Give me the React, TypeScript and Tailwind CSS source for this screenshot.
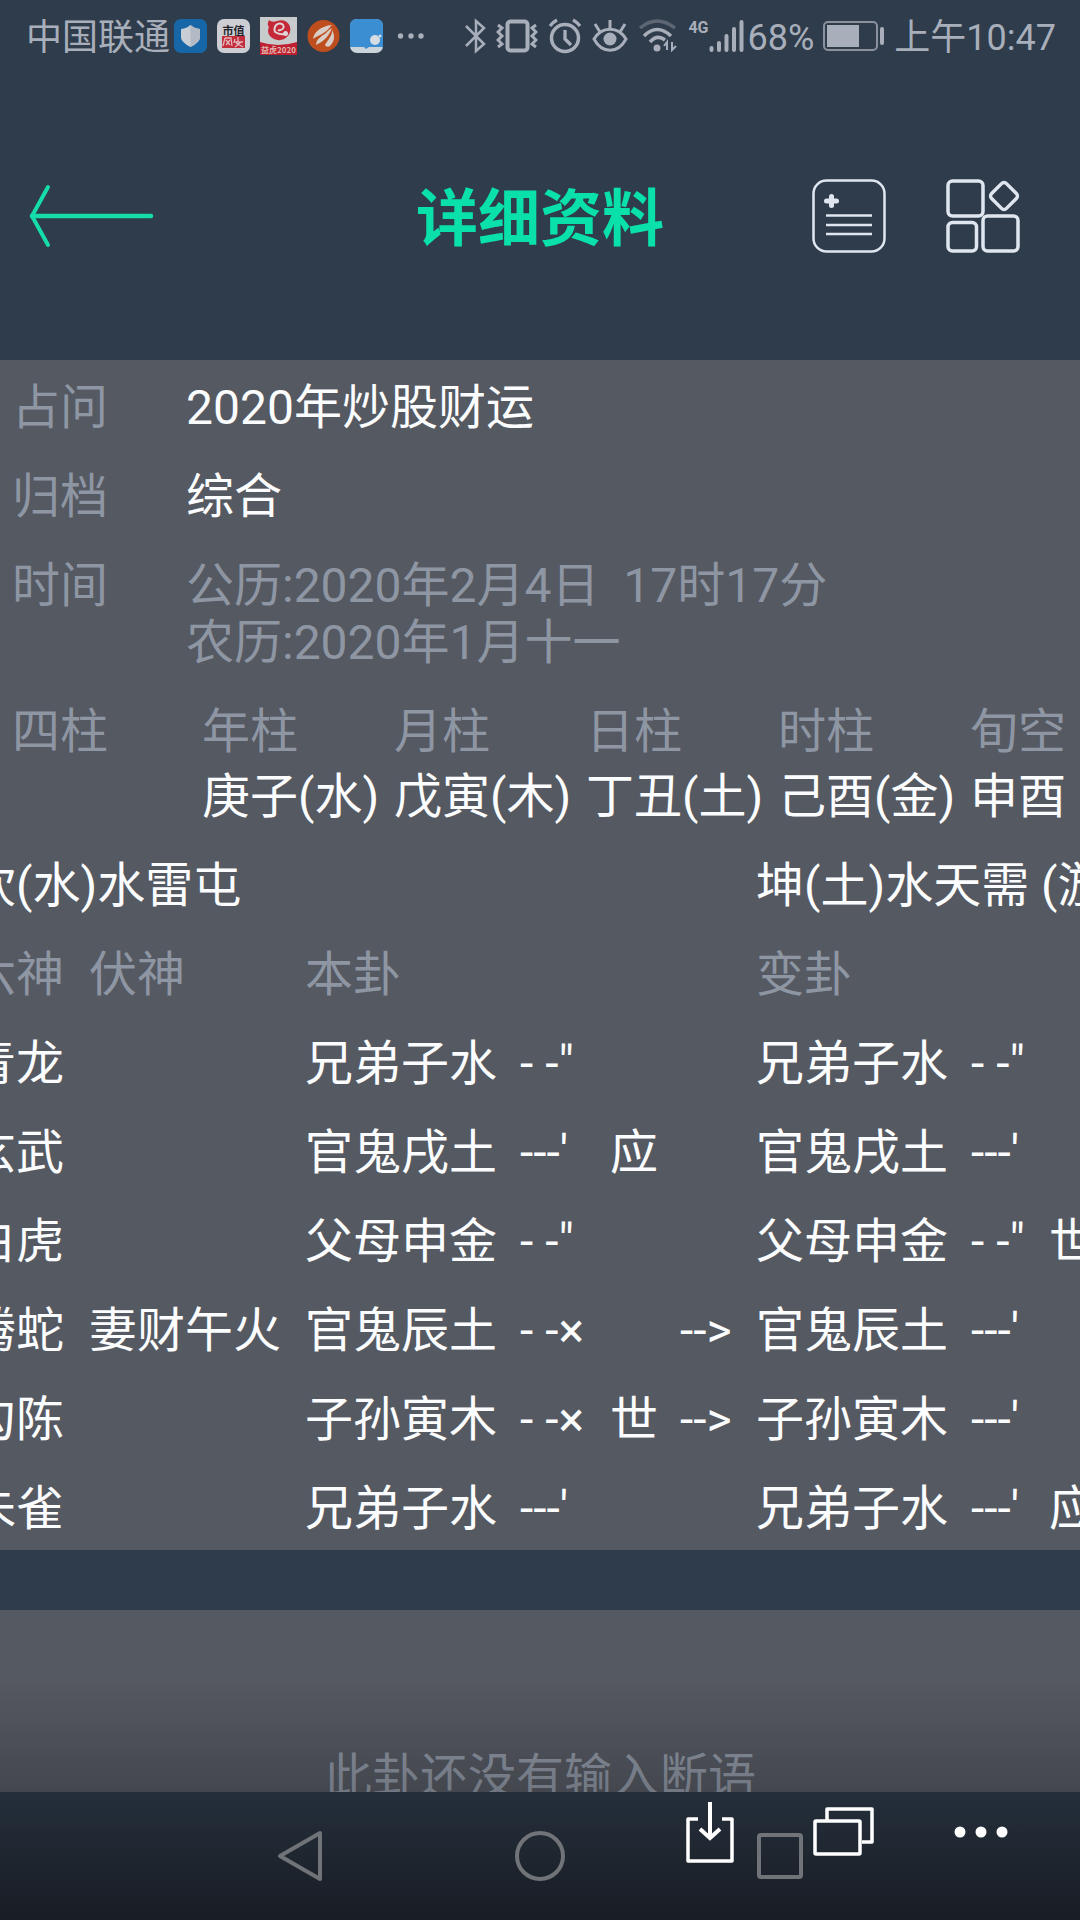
import React from "react";

type Cell = { text: string; line: string; mark?: string };
type GuaRow = { god: string; hidden?: string; base: Cell; moving?: boolean; changed: Cell };

const pillars = [
  { name: "年柱", value: "庚子(水)" },
  { name: "月柱", value: "戊寅(木)" },
  { name: "日柱", value: "丁丑(土)" },
  { name: "时柱", value: "己酉(金)" },
  { name: "旬空", value: "申酉" },
];

const rows: GuaRow[] = [
  { god: "青龙", base: { text: "兄弟子水", line: '- -"' }, changed: { text: "兄弟子水", line: '- -"' } },
  { god: "玄武", base: { text: "官鬼戌土", line: "---'", mark: "应" }, changed: { text: "官鬼戌土", line: "---'" } },
  { god: "白虎", base: { text: "父母申金", line: '- -"' }, changed: { text: "父母申金", line: '- -"', mark: "世" } },
  { god: "腾蛇", hidden: "妻财午火", base: { text: "官鬼辰土", line: "- -×" }, moving: true, changed: { text: "官鬼辰土", line: "---'" } },
  { god: "勾陈", base: { text: "子孙寅木", line: "- -×", mark: "世" }, moving: true, changed: { text: "子孙寅木", line: "---'" } },
  { god: "朱雀", base: { text: "兄弟子水", line: "---'" }, changed: { text: "兄弟子水", line: "---'", mark: "应" } },
];

function AppIcons() {
  return (
    <div className="flex items-center gap-2.5">
      <svg width="33" height="34" viewBox="0 0 33 34" aria-hidden="true">
        <rect width="33" height="34" rx="7" fill="#1767a8" />
        <path d="M16.500 6 C19 8.500 22 9.500 26 10 V18 C26 22 21.500 25.500 16.500 28 C11.500 25.500 7 22 7 18 V10 C11 9.500 14 8.500 16.500 6Z" fill="#c9ced5" />
        <path d="M16.500 6 C19 8.500 22 9.500 26 10 V18 C26 22 21.500 25.500 16.500 28Z" fill="#b3bac3" />
      </svg>
      <svg width="33" height="34" viewBox="0 0 33 34" aria-hidden="true">
        <rect width="33" height="34" rx="7" fill="#cdced4" />
        <text x="16.500" y="16" textAnchor="middle" fontSize="11" fontWeight="700" fill="#23242a" fontFamily="'Noto Sans CJK SC', sans-serif">市值</text>
        <rect x="5" y="17" width="23" height="12" fill="#c32c3a" />
        <path d="M8 19l-2 8M8 19h6l1 8M9 21l4 5M13 21l-4 5M18 20l-1 3h9M21 18v5M24 23l-6 5M19 24l7 4" stroke="#e3b6bb" strokeWidth="1.300" fill="none" />
      </svg>
      <svg width="37" height="38" viewBox="0 0 37 38" aria-hidden="true">
        <rect width="37" height="38" fill="#c8cbcb" />
        <path d="M9 3 C11 5 14 5 17 4 C26 1 32 8 30 15 C28 22 20 25 14 22 C8 19 7 14 9 10 C7 8 8 5 9 3Z" fill="#c52937" />
        <path d="M15 15 C13 9 18 5 22 7 C26 10 22 14 18 13 M15 15 C18 17 20 18 24 17" stroke="#e2d5d7" strokeWidth="2" fill="none" />
        <circle cx="25.500" cy="16.500" r="2.500" fill="#e2d5d7" />
        <path d="M0 25 Q18 31 37 25 V38 H0Z" fill="#bf1f31" />
        <text x="18.500" y="36" textAnchor="middle" fontSize="8" fontWeight="700" fill="#dfb9ad" fontFamily="'Noto Sans CJK SC', sans-serif">益虎2020</text>
      </svg>
      <svg width="33" height="34" viewBox="0 0 33 34" aria-hidden="true">
        <circle cx="16.500" cy="17" r="16" fill="#bf4e1e" />
        <g fill="#d8cdc7">
          <path d="M6 20 C7 13 14 7 25 6 C22 9 21 11 18 13 C14 16 10 17 6 20Z" />
          <path d="M9 26 C9 20 15 17 19 14 C22 11 23 10 25 9 C23 14 21 17 18 20 C15 23 12 24 9 26Z" />
          <path d="M18 26 C19 23 22 21 23 18 C25 15 25 13 25 11 C28 16 28 22 23 27 C21 28 19 28 18 26Z" />
        </g>
      </svg>
      <svg width="33" height="34" viewBox="0 0 33 34" aria-hidden="true">
        <rect width="33" height="34" rx="7" fill="#cbd3db" />
        <path d="M7 0 H26 Q33 0 33 7 V28 H19 L16 30 L14 28 H0 V7 Q0 0 7 0Z" fill="#3c8ed3" />
        <circle cx="25" cy="21" r="5" fill="#d5dce4" />
        <circle cx="30" cy="17" r="1.500" fill="#d5dce4" />
      </svg>
      <svg width="28" height="8" viewBox="0 0 28 8" className="ml-1" fill="#a9afba" aria-hidden="true">
        <circle cx="3.500" cy="4" r="2.700" />
        <circle cx="14" cy="4" r="2.700" />
        <circle cx="24" cy="4" r="2.700" />
      </svg>
    </div>
  );
}

function SystemIcons() {
  return (
    <div className="flex items-center gap-2.5">
      <svg width="21" height="36" viewBox="0 0 21 36" fill="none" stroke="#a9afba" strokeWidth="2.500" aria-hidden="true">
        <path d="M1 8 L19 26 L11 33 V3 L19 10 L1 28" />
      </svg>
      <svg width="42" height="36" viewBox="0 0 42 36" fill="none" stroke="#a9afba" aria-hidden="true">
        <rect x="11.500" y="3.500" width="20" height="29" rx="3" strokeWidth="4" />
        <path d="M2 7l4 3-4 4 4 4-4 4 4 4-4 3M40 7l-4 3 4 4-4 4 4 4-4 4 4 3" strokeWidth="3" />
      </svg>
      <svg width="34" height="36" viewBox="0 0 34 36" fill="none" stroke="#a9afba" strokeWidth="3.500" aria-hidden="true">
        <circle cx="17" cy="20" r="13.500" />
        <path d="M17 12v9l6 6M2 8q3-4 7-6M32 8q-3-4-7-6" strokeWidth="3.300" />
      </svg>
      <svg width="36" height="36" viewBox="0 0 36 36" fill="none" stroke="#a9afba" strokeWidth="3" aria-hidden="true">
        <path d="M2 21 C10 8 26 8 34 21 C26 36 10 36 2 21Z" />
        <circle cx="18" cy="21" r="6.500" fill="#a9afba" stroke="none" />
        <path d="M18 12V2M8 14L3 6M28 14L33 6" />
      </svg>
      <svg width="40" height="36" viewBox="0 0 40 36" fill="none" stroke="#a9afba" strokeWidth="3.500" aria-hidden="true">
        <path d="M2 10 Q19 -4 37 10" stroke="#5d6774" />
        <path d="M6 18 Q19 5 33 18M12 24 Q19 16 27 22" />
        <circle cx="19" cy="30" r="3.500" fill="#a9afba" stroke="none" />
        <path d="M29 32v-8l-3 4M34 24v8l4-4" strokeWidth="2" />
      </svg>
      <div className="flex items-center">
        <span className="-mt-4 text-base leading-5 font-bold">4G</span>
        <svg width="35" height="36" viewBox="0 0 35 36" stroke="#a9afba" strokeWidth="4" strokeLinecap="round" aria-hidden="true">
          <path d="M2.500 30v2M10 25v7M17.500 18v14M25 11v21M32.500 4v28" />
        </svg>
      </div>
    </div>
  );
}

function StatusBar() {
  return (
    <div className="flex h-[72px] items-center justify-between pr-6 pl-6.5 text-[36px] text-[#a9afba]">
      <div className="flex items-center gap-1">
        <span className="pt-1">中国联通</span>
        <AppIcons />
      </div>
      <div className="flex items-center gap-2">
        <div className="flex items-center gap-1">
          <SystemIcons />
          <span className="pt-1">68%</span>
        </div>
        <svg width="64" height="32" viewBox="0 0 64 32" aria-hidden="true">
          <rect x="2" y="2" width="53" height="28" rx="4" fill="none" stroke="#8b929e" strokeWidth="2" />
          <rect x="5" y="5" width="32" height="22" fill="#a9afba" />
          <rect x="58" y="7" width="4" height="18" rx="2" fill="#a9afba" />
        </svg>
        <span className="pt-1">上午10:47</span>
      </div>
    </div>
  );
}

function Header() {
  return (
    <header className="grid h-72 grid-cols-[1fr_auto_1fr] items-center px-7">
      <button type="button" aria-label="返回" className="w-fit">
        <svg width="128" height="66" viewBox="0 0 128 66" fill="none" stroke="#15dca9" strokeWidth="4" strokeLinecap="round">
          <path d="M20 4 L4 33 L20 62" />
          <path d="M4 33H123" strokeWidth="4.500" />
        </svg>
      </button>
      <h1 className="pt-2 text-[62px] leading-none font-bold text-[#0ae0aa]">详细资料</h1>
      <div className="flex justify-end gap-15 pr-8">
        <button type="button" aria-label="笔记">
          <svg width="74" height="74" viewBox="0 0 74 74" fill="none" stroke="#dfe6ef">
            <rect x="1.500" y="1.500" width="71" height="71" rx="13" strokeWidth="2.500" />
            <path d="M14 36.500h46M14 46h46M14 55h46" strokeWidth="2.500" />
            <path d="M19.500 17.500v9M14.500 22h10" strokeWidth="5" strokeLinecap="round" />
          </svg>
        </button>
        <button type="button" aria-label="更多功能">
          <svg width="74" height="74" viewBox="0 0 74 74" fill="none" stroke="#dfe6ef" strokeWidth="3.500">
            <rect x="2" y="2" width="35" height="35" rx="4.500" />
            <rect x="2" y="43.500" width="28.500" height="28.500" rx="4.500" />
            <rect x="37" y="37" width="35" height="35" rx="4.500" />
            <rect x="47.500" y="6.500" width="21" height="21" rx="3.500" transform="rotate(45 58 17)" />
          </svg>
        </button>
      </div>
    </header>
  );
}

function InfoRow({ label, children }: { label: string; children: React.ReactNode }) {
  return (
    <div className="flex py-4">
      <dt className="w-[186px] shrink-0 pl-3 text-[#8e96a3]">{label}</dt>
      <dd className="grow">{children}</dd>
    </div>
  );
}

function GuaTable() {
  return (
    <div className="overflow-hidden">
      <table className="-mb-[3px] -ml-8 w-[1240px] table-fixed border-collapse [&_td]:p-0 [&_th]:p-0 [&_th]:font-normal">
        <colgroup>
          <col className="w-[121px]" />
          <col className="w-[216px]" />
          <col className="w-[215px]" />
          <col className="w-[90px]" />
          <col className="w-[70px]" />
          <col className="w-[76px]" />
          <col className="w-[215px]" />
          <col className="w-[78px]" />
          <col />
        </colgroup>
        <thead>
          <tr className="h-[89px] text-left whitespace-pre">
            <th colSpan={6}>坎(水)水雷屯</th>
            <th colSpan={3}>坤(土)水天需 (游魂)</th>
          </tr>
          <tr className="h-[89px] text-left whitespace-pre text-[#8e96a3]">
            <th>六神</th>
            <th>伏神</th>
            <th colSpan={4}>本卦</th>
            <th colSpan={3}>变卦</th>
          </tr>
        </thead>
        <tbody>
          {rows.map((r) => (
            <tr key={r.god} className="h-[89px] text-left whitespace-pre">
              <td>{r.god}</td>
              <td>{r.hidden}</td>
              <td>{r.base.text}</td>
              <td>{r.base.line}</td>
              <td>{r.base.mark}</td>
              <td>{r.moving ? "-->" : ""}</td>
              <td>{r.changed.text}</td>
              <td>{r.changed.line}</td>
              <td>{r.changed.mark}</td>
            </tr>
          ))}
        </tbody>
      </table>
    </div>
  );
}

function BottomBar() {
  return (
    <div className="fixed inset-x-0 bottom-0">
      <div className="h-28 bg-linear-to-b from-transparent to-black/20" />
      <div className="relative h-32 bg-linear-to-b from-[#242f3b] to-[#191d25]">
        <nav className="flex h-full items-center justify-center gap-47 text-[#707377]">
          <button type="button" aria-label="后退">
            <svg width="52" height="52" viewBox="0 0 52 52" fill="none" stroke="currentColor" strokeWidth="4" strokeLinejoin="round">
              <path d="M46 3 V49 L6 26Z" />
            </svg>
          </button>
          <button type="button" aria-label="主页">
            <svg width="52" height="52" viewBox="0 0 52 52" fill="none" stroke="currentColor" strokeWidth="4">
              <circle cx="26" cy="26" r="23" />
            </svg>
          </button>
          <button type="button" aria-label="最近任务">
            <svg width="52" height="52" viewBox="0 0 52 52" fill="none" stroke="currentColor" strokeWidth="4">
              <rect x="5" y="5" width="42" height="42" rx="2" />
            </svg>
          </button>
        </nav>
        <div className="absolute top-2 right-17 flex items-center text-white">
          <button type="button" aria-label="保存" className="mr-19">
            <svg width="52" height="64" viewBox="0 0 52 64" fill="none" stroke="currentColor" strokeWidth="4">
              <path d="M14 19 H4 V61 H48 V19 H38" strokeLinejoin="round" strokeWidth="3.500" />
              <path d="M26 2 V37 M16 29 L26 38 L36 29" />
            </svg>
          </button>
          <button type="button" aria-label="窗口" className="mr-19">
            <svg width="64" height="52" viewBox="0 0 64 52" fill="none" stroke="currentColor" strokeWidth="3.500" strokeLinejoin="round">
              <path d="M15 14 V3 H60 V36 H50" />
              <rect x="3" y="15" width="45" height="33" rx="1" />
            </svg>
          </button>
          <button type="button" aria-label="更多">
            <svg width="60" height="16" viewBox="0 0 60 16" fill="currentColor">
              <circle cx="8" cy="8" r="5.500" />
              <circle cx="29" cy="8" r="5.500" />
              <circle cx="50" cy="8" r="5.500" />
            </svg>
          </button>
        </div>
      </div>
    </div>
  );
}

export default function App() {
  return (
    <div className="flex min-h-screen flex-col overflow-hidden bg-[#2e3c4c] font-[Roboto,'Noto_Sans_CJK_SC',sans-serif]">
      <StatusBar />
      <Header />
      <main className="flex grow flex-col gap-15 text-[48px] leading-[57px] text-[#fbfcfd]">
        <section className="bg-[#555962] pt-[3px]">
          <dl>
            <InfoRow label="占问">2020年炒股财运</InfoRow>
            <InfoRow label="归档">综合</InfoRow>
            <InfoRow label="时间">
              <p className="whitespace-pre text-[#8e96a3]">公历:2020年2月4日  17时17分</p>
              <p className="text-[#8e96a3]">农历:2020年1月十一</p>
            </InfoRow>
            <InfoRow label="四柱">
              <div className="grid grid-cols-[repeat(4,minmax(0,1fr))_110px] pl-4">
                {pillars.map((p) => (
                  <div key={p.name} className="flex flex-col gap-2 whitespace-nowrap">
                    <span className="text-[#8e96a3]">{p.name}</span>
                    <span>{p.value}</span>
                  </div>
                ))}
              </div>
            </InfoRow>
          </dl>
          <GuaTable />
        </section>
        <section className="grow bg-[#555962] pt-[138px] text-center text-[#8e96a3]">
          <p>此卦还没有输入断语</p>
        </section>
      </main>
      <BottomBar />
    </div>
  );
}
